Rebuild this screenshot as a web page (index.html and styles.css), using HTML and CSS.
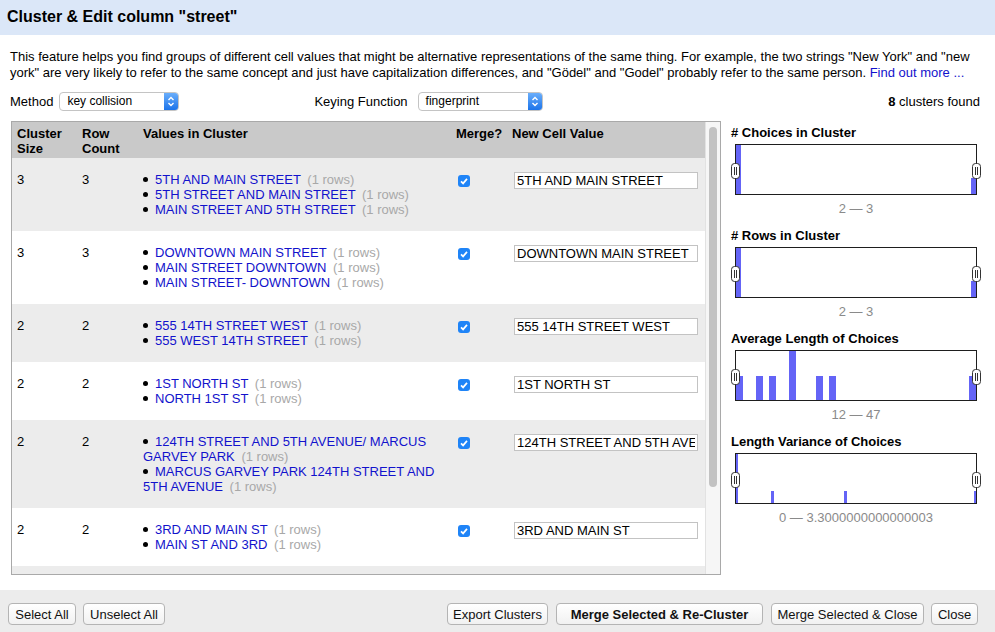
FILE: index.html
```html
<!DOCTYPE html>
<html>
<head>
<meta charset="utf-8">
<link rel="stylesheet" href="styles.css">
</head>
<body>
<div class="titlebar">Cluster &amp; Edit column "street"</div>
<div class="content">
  <div class="desc">This feature helps you find groups of different cell values that might be alternative representations of the same thing. For example, the two strings "New York" and "new<br>york" are very likely to refer to the same concept and just have capitalization differences, and "Gödel" and "Godel" probably refer to the same person. <span class="link">Find out more ...</span></div>
  <div class="controls">
    <span>Method</span>
    <div class="select sel-method"><span class="sel-text">key collision</span><span class="sel-arrow"><svg width="14" height="17" viewBox="0 0 14 17"><path d="M4.5 7 L7 4.5 L9.5 7 M4.5 10 L7 12.5 L9.5 10" fill="none" stroke="#fff" stroke-width="1.4"/></svg></span></div>
    <span class="kf">Keying Function</span>
    <div class="select sel-key"><span class="sel-text">fingerprint</span><span class="sel-arrow"><svg width="14" height="17" viewBox="0 0 14 17"><path d="M4.5 7 L7 4.5 L9.5 7 M4.5 10 L7 12.5 L9.5 10" fill="none" stroke="#fff" stroke-width="1.4"/></svg></span></div>
    <span class="found"><b>8</b> clusters found</span>
  </div>
  <div class="main">
    <div class="panel">
      <div class="tablewrap">
        <table class="clusters">
          <colgroup><col class="c1"><col class="c2"><col class="c3"><col class="c4"><col class="c5"></colgroup>
          <thead>
            <tr><th>Cluster Size</th><th>Row Count</th><th>Values in Cluster</th><th>Merge?</th><th>New Cell Value</th></tr>
          </thead>
          <tbody>
            <tr class="odd">
              <td>3</td><td>3</td>
              <td>
                <div class="val"><span class="dot"></span><span class="link">5TH AND MAIN STREET</span> <span class="cnt">(1 rows)</span></div>
                <div class="val"><span class="dot"></span><span class="link">5TH STREET AND MAIN STREET</span> <span class="cnt">(1 rows)</span></div>
                <div class="val"><span class="dot"></span><span class="link">MAIN STREET AND 5TH STREET</span> <span class="cnt">(1 rows)</span></div>
              </td>
              <td><span class="cb"><svg width="12" height="12" viewBox="0 0 12 12"><path d="M3 6.3 L5.1 8.4 L9 3.9" fill="none" stroke="#fff" stroke-width="1.7"/></svg></span></td>
              <td><input class="newval" type="text" value="5TH AND MAIN STREET"></td>
            </tr>
            <tr class="even">
              <td>3</td><td>3</td>
              <td>
                <div class="val"><span class="dot"></span><span class="link">DOWNTOWN MAIN STREET</span> <span class="cnt">(1 rows)</span></div>
                <div class="val"><span class="dot"></span><span class="link">MAIN STREET DOWNTOWN</span> <span class="cnt">(1 rows)</span></div>
                <div class="val"><span class="dot"></span><span class="link">MAIN STREET- DOWNTOWN</span> <span class="cnt">(1 rows)</span></div>
              </td>
              <td><span class="cb"><svg width="12" height="12" viewBox="0 0 12 12"><path d="M3 6.3 L5.1 8.4 L9 3.9" fill="none" stroke="#fff" stroke-width="1.7"/></svg></span></td>
              <td><input class="newval" type="text" value="DOWNTOWN MAIN STREET"></td>
            </tr>
            <tr class="odd">
              <td>2</td><td>2</td>
              <td>
                <div class="val"><span class="dot"></span><span class="link">555 14TH STREET WEST</span> <span class="cnt">(1 rows)</span></div>
                <div class="val"><span class="dot"></span><span class="link">555 WEST 14TH STREET</span> <span class="cnt">(1 rows)</span></div>
              </td>
              <td><span class="cb"><svg width="12" height="12" viewBox="0 0 12 12"><path d="M3 6.3 L5.1 8.4 L9 3.9" fill="none" stroke="#fff" stroke-width="1.7"/></svg></span></td>
              <td><input class="newval" type="text" value="555 14TH STREET WEST"></td>
            </tr>
            <tr class="even">
              <td>2</td><td>2</td>
              <td>
                <div class="val"><span class="dot"></span><span class="link">1ST NORTH ST</span> <span class="cnt">(1 rows)</span></div>
                <div class="val"><span class="dot"></span><span class="link">NORTH 1ST ST</span> <span class="cnt">(1 rows)</span></div>
              </td>
              <td><span class="cb"><svg width="12" height="12" viewBox="0 0 12 12"><path d="M3 6.3 L5.1 8.4 L9 3.9" fill="none" stroke="#fff" stroke-width="1.7"/></svg></span></td>
              <td><input class="newval" type="text" value="1ST NORTH ST"></td>
            </tr>
            <tr class="odd">
              <td>2</td><td>2</td>
              <td>
                <div class="val"><span class="dot"></span><span class="link">124TH STREET AND 5TH AVENUE/ MARCUS GARVEY PARK</span> <span class="cnt">(1 rows)</span></div>
                <div class="val"><span class="dot"></span><span class="link">MARCUS GARVEY PARK 124TH STREET AND 5TH AVENUE</span> <span class="cnt">(1 rows)</span></div>
              </td>
              <td><span class="cb"><svg width="12" height="12" viewBox="0 0 12 12"><path d="M3 6.3 L5.1 8.4 L9 3.9" fill="none" stroke="#fff" stroke-width="1.7"/></svg></span></td>
              <td><input class="newval" type="text" value="124TH STREET AND 5TH AVENUE/ MARCUS GARVEY PARK"></td>
            </tr>
            <tr class="even">
              <td>2</td><td>2</td>
              <td>
                <div class="val"><span class="dot"></span><span class="link">3RD AND MAIN ST</span> <span class="cnt">(1 rows)</span></div>
                <div class="val"><span class="dot"></span><span class="link">MAIN ST AND 3RD</span> <span class="cnt">(1 rows)</span></div>
              </td>
              <td><span class="cb"><svg width="12" height="12" viewBox="0 0 12 12"><path d="M3 6.3 L5.1 8.4 L9 3.9" fill="none" stroke="#fff" stroke-width="1.7"/></svg></span></td>
              <td><input class="newval" type="text" value="3RD AND MAIN ST"></td>
            </tr>
            <tr class="odd filler">
              <td></td><td></td><td></td><td></td><td></td>
            </tr>
          </tbody>
        </table>
      </div>
      <div class="vscroll"><div class="thumb"></div></div>
    </div>
    <div class="facets">
      <div class="facet">
        <div class="ftitle"># Choices in Cluster</div>
        <div class="hbox">
          <svg class="bars" width="240" height="49" viewBox="0 0 240 49"><rect x="0" y="0" width="5" height="49"/><rect x="235" y="33" width="5" height="16"/></svg>
          <span class="handle hl"><svg width="9" height="16" viewBox="0 0 9 16"><rect x="0.5" y="0.5" width="8" height="15" rx="3" fill="#fff" stroke="#333"/><path d="M3.5 4 V12 M5.5 4 V12" stroke="#333"/></svg></span>
          <span class="handle hr"><svg width="9" height="16" viewBox="0 0 9 16"><rect x="0.5" y="0.5" width="8" height="15" rx="3" fill="#fff" stroke="#333"/><path d="M3.5 4 V12 M5.5 4 V12" stroke="#333"/></svg></span>
        </div>
        <div class="range">2 — 3</div>
      </div>
      <div class="facet">
        <div class="ftitle"># Rows in Cluster</div>
        <div class="hbox">
          <svg class="bars" width="240" height="49" viewBox="0 0 240 49"><rect x="0" y="0" width="5" height="49"/><rect x="235" y="33" width="5" height="16"/></svg>
          <span class="handle hl"><svg width="9" height="16" viewBox="0 0 9 16"><rect x="0.5" y="0.5" width="8" height="15" rx="3" fill="#fff" stroke="#333"/><path d="M3.5 4 V12 M5.5 4 V12" stroke="#333"/></svg></span>
          <span class="handle hr"><svg width="9" height="16" viewBox="0 0 9 16"><rect x="0.5" y="0.5" width="8" height="15" rx="3" fill="#fff" stroke="#333"/><path d="M3.5 4 V12 M5.5 4 V12" stroke="#333"/></svg></span>
        </div>
        <div class="range">2 — 3</div>
      </div>
      <div class="facet">
        <div class="ftitle">Average Length of Choices</div>
        <div class="hbox">
          <svg class="bars" width="240" height="49" viewBox="0 0 240 49"><rect x="0" y="25" width="7" height="24"/><rect x="20" y="25" width="7" height="24"/><rect x="33" y="25" width="7" height="24"/><rect x="53" y="0" width="7" height="49"/><rect x="80" y="25" width="7" height="24"/><rect x="93" y="25" width="7" height="24"/><rect x="233" y="25" width="7" height="24"/></svg>
          <span class="handle hl"><svg width="9" height="16" viewBox="0 0 9 16"><rect x="0.5" y="0.5" width="8" height="15" rx="3" fill="#fff" stroke="#333"/><path d="M3.5 4 V12 M5.5 4 V12" stroke="#333"/></svg></span>
          <span class="handle hr"><svg width="9" height="16" viewBox="0 0 9 16"><rect x="0.5" y="0.5" width="8" height="15" rx="3" fill="#fff" stroke="#333"/><path d="M3.5 4 V12 M5.5 4 V12" stroke="#333"/></svg></span>
        </div>
        <div class="range">12 — 47</div>
      </div>
      <div class="facet">
        <div class="ftitle">Length Variance of Choices</div>
        <div class="hbox">
          <svg class="bars" width="240" height="49" viewBox="0 0 240 49"><rect x="0" y="0" width="2" height="49"/><rect x="35" y="37" width="3" height="12"/><rect x="108" y="37" width="3" height="12"/><rect x="238" y="37" width="2" height="12"/></svg>
          <span class="handle hl"><svg width="9" height="16" viewBox="0 0 9 16"><rect x="0.5" y="0.5" width="8" height="15" rx="3" fill="#fff" stroke="#333"/><path d="M3.5 4 V12 M5.5 4 V12" stroke="#333"/></svg></span>
          <span class="handle hr"><svg width="9" height="16" viewBox="0 0 9 16"><rect x="0.5" y="0.5" width="8" height="15" rx="3" fill="#fff" stroke="#333"/><path d="M3.5 4 V12 M5.5 4 V12" stroke="#333"/></svg></span>
        </div>
        <div class="range">0 — 3.3000000000000003</div>
      </div>
    </div>
  </div>
</div>
<div class="footer">
  <div class="btngroup">
    <button class="btn b-selall">Select All</button>
    <button class="btn b-unsel">Unselect All</button>
  </div>
  <div class="btngroup">
    <button class="btn b-export">Export Clusters</button>
    <button class="btn b-recluster">Merge Selected &amp; Re-Cluster</button>
    <button class="btn b-close2">Merge Selected &amp; Close</button>
    <button class="btn b-close">Close</button>
  </div>
</div>
</body>
</html>
```
FILE: styles.css
```css
html, body {
  margin: 0;
  padding: 0;
}
body {
  width: 995px;
  height: 632px;
  overflow: hidden;
  display: flex;
  flex-direction: column;
  font-family: "Liberation Sans", Arial, sans-serif;
  font-size: 13px;
  color: #000;
  background: #fff;
}
.titlebar {
  height: 35px;
  flex: none;
  background: #dbe7f8;
  padding-left: 7px;
  font-size: 16px;
  font-weight: bold;
  line-height: 33px;
  box-sizing: border-box;
}
.content {
  flex: 1;
  display: flex;
  flex-direction: column;
  padding: 0 15px 0 10px;
  min-height: 0;
}
.desc {
  margin-top: 14px;
  line-height: 16px;
  white-space: nowrap;
}
.link {
  color: #1212cc;
}
.controls {
  margin-top: 11px;
  height: 19px;
  display: flex;
  align-items: center;
}
.select {
  display: flex;
  height: 19px;
  box-sizing: border-box;
  border: 1px solid #c4c4c4;
  border-radius: 4px;
  background: #fff;
  font-size: 12px;
  overflow: hidden;
}
.sel-method {
  width: 120px;
  margin-left: 6px;
}
.sel-key {
  width: 125px;
  margin-left: 10px;
}
.sel-text {
  flex: 1;
  padding-left: 7px;
  line-height: 17px;
}
.sel-arrow {
  width: 14px;
  height: 17px;
  background: linear-gradient(#6aaefb, #1c74ea);
  display: block;
}
.sel-arrow svg {
  display: block;
}
.kf {
  margin-left: 135px;
}
.found {
  margin-left: auto;
}
.main {
  margin-top: 10px;
  margin-bottom: 15px;
  flex: 1;
  display: flex;
  min-height: 0;
}
.panel {
  width: 710px;
  margin-left: 1px;
  box-sizing: border-box;
  border: 1px solid #a9a9a9;
  display: flex;
  overflow: hidden;
}
.tablewrap {
  width: 693px;
  overflow: hidden;
}
.clusters {
  width: 693px;
  table-layout: fixed;
  border-collapse: collapse;
  border-spacing: 0;
  line-height: 15px;
}
.c1 { width: 65px; }
.c2 { width: 61px; }
.c3 { width: 313px; }
.c4 { width: 56px; }
.c5 { width: 198px; }
.clusters th {
  background: #c9c9c9;
  text-align: left;
  vertical-align: top;
  padding: 4px 5px 2px;
  font-weight: bold;
}
.clusters td {
  vertical-align: top;
  padding: 14px 5px;
}
.odd td { background: #ececec; }
.even td { background: #fff; }
.filler td { height: 30px; }
.val .dot {
  display: inline-block;
  width: 5px;
  height: 5px;
  border-radius: 50%;
  background: #000;
  vertical-align: middle;
  margin-right: 7px;
  position: relative;
  top: -1px;
}
.cnt {
  color: #a8a8a8;
  margin-left: 3px;
}
.cb {
  display: block;
  width: 12px;
  height: 12px;
  margin: 3px 0 0 2px;
  border-radius: 3px;
  background: #1f84f7;
}
.cb svg { display: block; }
.newval {
  display: block;
  width: 184px;
  height: 17px;
  margin: 0 0 0 2px;
  box-sizing: border-box;
  border: 1px solid #c3c3c3;
  padding: 0 2px;
  font-family: "Liberation Sans", Arial, sans-serif;
  font-size: 13px;
  color: #000;
  background: #fff;
}
.vscroll {
  width: 15px;
  box-sizing: border-box;
  background: #f6f6f6;
  border-left: 1px solid #e2e2e2;
  padding: 5px 3px 0 3px;
}
.thumb {
  width: 8px;
  height: 360px;
  border-radius: 4px;
  background: #c2c2c2;
}
.facets {
  margin-left: 9px;
  padding-top: 4px;
  width: 250px;
}
.facet {
  margin-bottom: 11px;
}
.ftitle {
  font-weight: bold;
  line-height: 16px;
  padding-left: 1px;
}
.hbox {
  position: relative;
  margin: 3px 0 0 5px;
  width: 242px;
  height: 51px;
  box-sizing: border-box;
  border: 1px solid #1e1e1e;
}
.bars {
  display: block;
  fill: #6464f6;
}
.handle {
  position: absolute;
  top: 18px;
  width: 9px;
  height: 16px;
}
.handle svg { display: block; }
.hl { left: -5px; }
.hr { right: -5px; }
.range {
  margin: 6px 0 0 5px;
  width: 242px;
  text-align: center;
  color: #8a8a8a;
  line-height: 16px;
}
.footer {
  flex: none;
  height: 42px;
  box-sizing: border-box;
  background: #ececec;
  padding: 13px 17px 0 8px;
  display: flex;
  justify-content: space-between;
  align-items: flex-start;
}
.btngroup {
  display: flex;
  gap: 7px;
}
.btn {
  height: 22px;
  padding: 0;
  box-sizing: border-box;
  border: 1px solid #b4b4b4;
  border-radius: 4px;
  background: linear-gradient(#ffffff, #f1f1f1);
  font-family: "Liberation Sans", Arial, sans-serif;
  font-size: 13px;
  color: #111;
  white-space: nowrap;
}
.b-selall { width: 68px; }
.b-unsel { width: 82px; }
.b-export { width: 101px; }
.b-recluster { width: 207px; font-weight: bold; margin-left: 1px; }
.b-close2 { width: 153px; margin-left: 1px; }
.b-close { width: 47px; }
```
